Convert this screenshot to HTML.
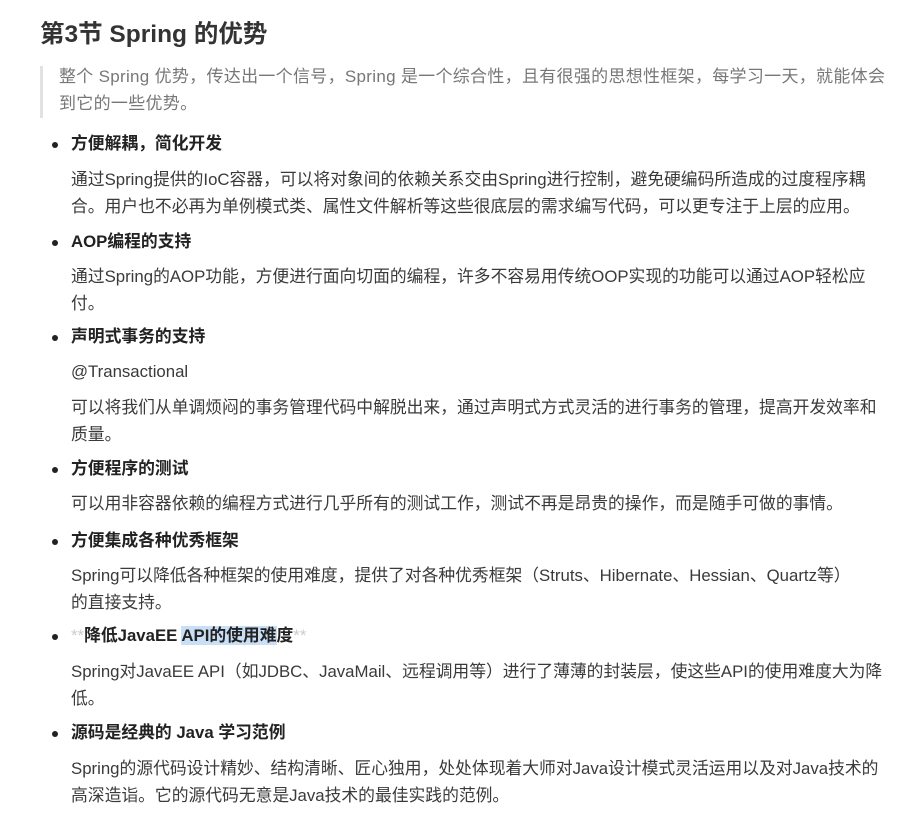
<!DOCTYPE html>
<html><head><meta charset="utf-8"><style>
body{margin:0;width:919px;height:820px;background:#fff;position:relative;overflow:hidden;font-family:"Liberation Sans","Noto Sans CJK SC",sans-serif;color:#333}
.l{position:absolute;white-space:nowrap;font-size:16.8px;line-height:20px;color:#3a3a3a}
.h{position:absolute;white-space:nowrap;font-size:16.8px;font-weight:bold;line-height:20px;color:#222;left:71px}
.b{position:absolute;left:52px;width:6px;height:6px;border-radius:50%;background:#222}
.q{position:absolute;white-space:nowrap;font-size:17px;letter-spacing:0.3px;line-height:20px;color:#777;left:59px}
.hl{background:#c9dff5}
.st{color:#ccc;font-weight:normal}
</style></head><body>
<div style="position:absolute;left:40px;top:15px;font-size:24.5px;font-weight:bold;color:#333;white-space:nowrap">第3节 Spring 的优势</div>
<div style="position:absolute;left:40px;top:66px;width:3px;height:52px;background:#e2e2e2"></div>
<div class="q" style="top:67px">整个 Spring 优势，传达出一个信号，Spring 是一个综合性，且有很强的思想性框架，每学习一天，就能体会</div>
<div class="q" style="top:94px">到它的一些优势。</div>

<div class="b" style="top:142px"></div><div class="h" style="top:134px">方便解耦，简化开发</div>
<div class="l" style="left:71px;top:170px">通过Spring提供的IoC容器，可以将对象间的依赖关系交由Spring进行控制，避免硬编码所造成的过度程序耦</div>
<div class="l" style="left:71px;top:197px">合。用户也不必再为单例模式类、属性文件解析等这些很底层的需求编写代码，可以更专注于上层的应用。</div>

<div class="b" style="top:240px"></div><div class="h" style="top:232px">AOP编程的支持</div>
<div class="l" style="left:71px;top:267px">通过Spring的AOP功能，方便进行面向切面的编程，许多不容易用传统OOP实现的功能可以通过AOP轻松应</div>
<div class="l" style="left:71px;top:294px">付。</div>

<div class="b" style="top:335px"></div><div class="h" style="top:327px">声明式事务的支持</div>
<div class="l" style="left:71px;top:362px">@Transactional</div>
<div class="l" style="left:71px;top:398px">可以将我们从单调烦闷的事务管理代码中解脱出来，通过声明式方式灵活的进行事务的管理，提高开发效率和</div>
<div class="l" style="left:71px;top:425px">质量。</div>

<div class="b" style="top:467px"></div><div class="h" style="top:459px">方便程序的测试</div>
<div class="l" style="left:71px;top:494px">可以用非容器依赖的编程方式进行几乎所有的测试工作，测试不再是昂贵的操作，而是随手可做的事情。</div>

<div class="b" style="top:539px"></div><div class="h" style="top:531px">方便集成各种优秀框架</div>
<div class="l" style="left:71px;top:566px">Spring可以降低各种框架的使用难度，提供了对各种优秀框架（Struts、Hibernate、Hessian、Quartz等）</div>
<div class="l" style="left:71px;top:593px">的直接支持。</div>

<div class="b" style="top:634px"></div><div class="h" style="top:626px"><span class="st">**</span>降低JavaEE <span class="hl">API的使用难</span>度<span class="st">**</span></div>
<div class="l" style="left:71px;top:662px">Spring对JavaEE API（如JDBC、JavaMail、远程调用等）进行了薄薄的封装层，使这些API的使用难度大为降</div>
<div class="l" style="left:71px;top:689px">低。</div>

<div class="b" style="top:731px"></div><div class="h" style="top:723px">源码是经典的 Java 学习范例</div>
<div class="l" style="left:71px;top:759px">Spring的源代码设计精妙、结构清晰、匠心独用，处处体现着大师对Java设计模式灵活运用以及对Java技术的</div>
<div class="l" style="left:71px;top:786px">高深造诣。它的源代码无意是Java技术的最佳实践的范例。</div>
</body></html>
